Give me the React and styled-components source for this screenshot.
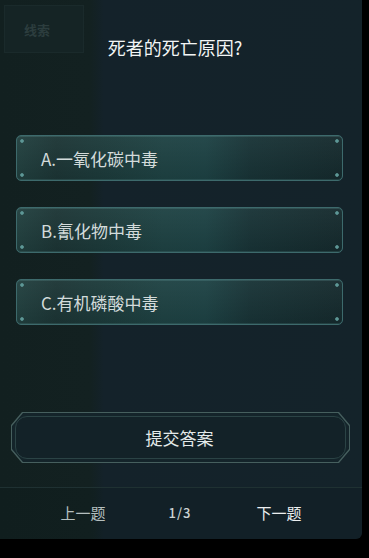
import React from "react";
import styled, { createGlobalStyle } from "styled-components";

const GlobalStyle = createGlobalStyle`
  html, body {
    margin: 0;
    padding: 0;
    background: #000;
  }
  body {
    font-family: "Noto Sans CJK SC", "Noto Sans", sans-serif;
  }
`;

const Panel = styled.div`
  width: 362px;
  height: 539px;
  display: flex;
  flex-direction: column;
  background: linear-gradient(90deg, #122020 0, #132121 90px, #14222a 104px, #14232a 100%);
  border-bottom-right-radius: 6px;
  overflow: hidden;
`;

const Header = styled.div`
  display: grid;
  height: 135px;
  align-items: start;
`;

const Tab = styled.div`
  grid-area: 1 / 1;
  justify-self: start;
  margin: 5px 0 0 4px;
  width: 80px;
  height: 48px;
  box-sizing: border-box;
  border: 1px solid #1a2a2b;
  background: #152425;
  display: flex;
  align-items: center;
  justify-content: center;
  padding-right: 14px;
  color: #2c3d3e;
  font-size: 13px;
  font-weight: 700;
`;

const Title = styled.h1`
  grid-area: 1 / 1;
  justify-self: center;
  margin: 35px 12px 0 0;
  font-size: 18px;
  line-height: 24px;
  font-weight: 400;
  color: #f2f5f5;
`;

const Options = styled.div`
  display: flex;
  flex-direction: column;
  gap: 26px;
  margin-left: 16px;
  width: 327px;
`;

const dot = "radial-gradient(circle, #5d9796 0 1.4px, transparent 2.2px)";

const Option = styled.div`
  height: 46px;
  box-sizing: border-box;
  border: 1px solid #3d6a6c;
  border-radius: 5px;
  display: flex;
  align-items: center;
  padding-left: 24px;
  font-size: 17px;
  color: ${props => (props.selected ? "#ffffff" : "#d3dbdb")};
  box-shadow: inset 0 1px 0 rgba(120, 180, 180, 0.2),
    inset 0 -1px 0 rgba(80, 130, 130, 0.25);
  background: ${dot} no-repeat 2px 2px / 6px 6px,
    ${dot} no-repeat calc(100% - 2px) 2px / 6px 6px,
    ${dot} no-repeat 2px calc(100% - 2px) / 6px 6px,
    ${dot} no-repeat calc(100% - 2px) calc(100% - 2px) / 6px 6px,
    linear-gradient(180deg, rgba(255, 255, 255, 0.04), rgba(0, 0, 0, 0.08)),
    linear-gradient(
      90deg,
      #21403f 0%,
      #1c3535 12%,
      #1c3a3a 25%,
      #1e4243 45%,
      #1d4244 58%,
      #183336 72%,
      #152a2d 100%
    );
`;

const octagon = `polygon(
  11px 0, calc(100% - 11px) 0, 100% 13px, 100% calc(100% - 13px),
  calc(100% - 11px) 100%, 11px 100%, 0 calc(100% - 13px), 0 13px
)`;

const SubmitFrame = styled.button`
  margin: 87px 0 0 11px;
  width: 339px;
  height: 51px;
  padding: 1px;
  border: 0;
  background: #465f5e;
  clip-path: ${octagon};
  cursor: pointer;
  font-family: inherit;
  display: flex;
`;

const SubmitBody = styled.span`
  flex: 1;
  display: flex;
  padding: 3px;
  background: #14242a;
  clip-path: ${octagon};
`;

const SubmitInner = styled.span`
  flex: 1;
  display: flex;
  align-items: center;
  justify-content: center;
  border: 1px solid #2b4345;
  border-radius: 12px;
  background: #132228;
  color: #e4eaea;
  font-size: 17px;
  padding-right: 2px;
`;

const Divider = styled.div`
  margin-top: 24px;
  height: 1px;
  background: #1f3132;
`;

const Nav = styled.div`
  flex: 1;
  display: flex;
  align-items: center;
  justify-content: center;
  gap: 63px;
  padding-bottom: 2px;
  background: rgba(0, 0, 0, 0.06);
`;

const NavButton = styled.span`
  font-size: 15px;
  color: ${props => (props.bright ? "#eceff0" : "#b5bfbf")};
`;

const Pager = styled.span`
  font-size: 13px;
  font-weight: 500;
  letter-spacing: 1px;
  color: #ccd3d3;
  padding-right: 2px;
`;

const options = ["A.一氧化碳中毒", "B.氰化物中毒", "C.有机磷酸中毒"];

const App = () => {
  return (
    <React.Fragment>
      <GlobalStyle />
      <Panel>
        <Header>
          <Tab>线索</Tab>
          <Title>死者的死亡原因?</Title>
        </Header>
        <Options>
          {options.map(text => (
            <Option key={text}>{text}</Option>
          ))}
        </Options>
        <SubmitFrame>
          <SubmitBody>
            <SubmitInner>提交答案</SubmitInner>
          </SubmitBody>
        </SubmitFrame>
        <Divider />
        <Nav>
          <NavButton>上一题</NavButton>
          <Pager>1/3</Pager>
          <NavButton bright>下一题</NavButton>
        </Nav>
      </Panel>
    </React.Fragment>
  );
};

export default App;
